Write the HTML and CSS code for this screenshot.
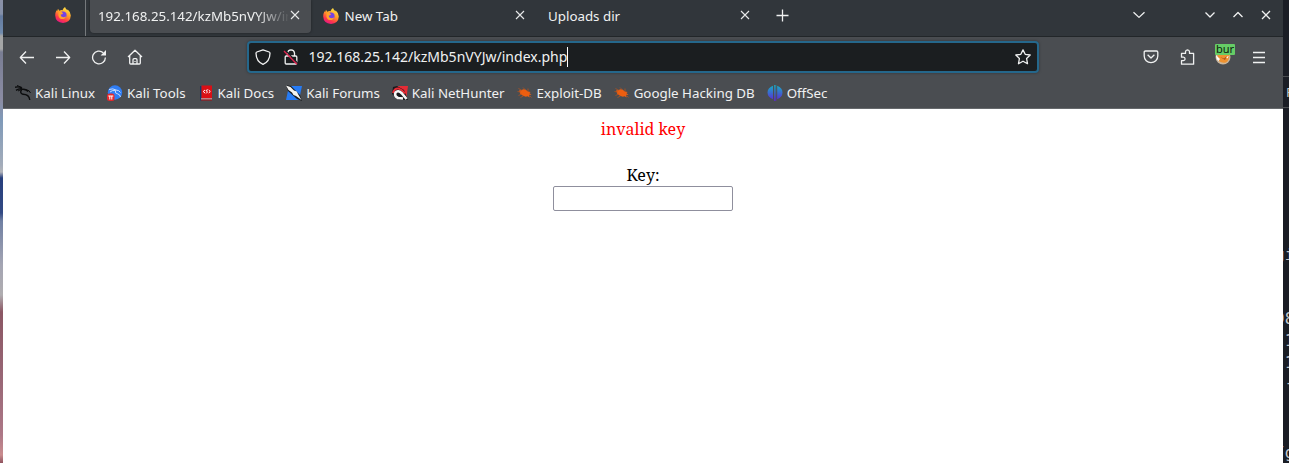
FILE: index.html
```html
<!DOCTYPE html>
<html lang="en">
<head>
    <meta charset="UTF-8">
    <meta name="viewport" content="width=device-width, initial-scale=1.0">
    <title>index.php</title>
    <link rel="stylesheet" href="styles.css">
</head>
<body>
    <!-- Shared icon shapes -->
    <svg class="defs" width="0" height="0">
        <defs>
            <linearGradient id="fox" x1="0.8" y1="0" x2="0.3" y2="1">
                <stop offset="0" stop-color="#fff04a"/>
                <stop offset="0.45" stop-color="#ff9b28"/>
                <stop offset="0.75" stop-color="#ff3a48"/>
                <stop offset="1" stop-color="#e31587"/>
            </linearGradient>
            <linearGradient id="offsec" gradientUnits="userSpaceOnUse" x1="0" y1="0" x2="0" y2="16">
                <stop offset="0" stop-color="#16b0c4"/>
                <stop offset="1" stop-color="#5f22d8"/>
            </linearGradient>
            <symbol id="firefox" viewBox="0 0 16 16">
                <path fill="url(#fox)" d="M1.5 3.2 2.2 4 3 1.8 4.3 3.7Q6 2.8 7.5 3.2 8 1.4 10 0q.6 2 2.4 3.2.3-.4.2-1Q15.8 5 15.8 8.6 15.4 15.6 8 16 .6 15.5.2 8.5.2 5.5 1.5 3.2z"/>
                <circle cx="8" cy="8" r="3.6" fill="#7543e3"/>
                <path fill="#ffa32b" d="M3.5 5.2Q6 4 8 6.2L7.6 7 5.6 7.8q.2 2.4 2.6 2.4 2 0 3-1-.8 2.8-3.6 2.8Q4 12 3.4 8.4z"/>
            </symbol>
            <symbol id="close" viewBox="0 0 10 10">
                <path d="M1 1l8 8M9 1L1 9" fill="none" stroke="#e8e9ea" stroke-width="1.1"/>
            </symbol>
            <symbol id="spider" viewBox="0 0 16 16">
                <path fill="#ec5e10" d="M2 5.500 4.500 5 6.400 4.200 8.400 4.400 11 6.400 13.800 7 12.400 8 14.500 10 12.200 9.800 12.600 12.400 10.600 11.200 8.800 11.700 6 10.800 3.400 9z"/>
                <path fill="none" stroke="#c05318" stroke-width=".7" d="M1.500 3.500 5 5.500M.5 6.500 4 7M1.500 10.500 5 9M3.500 12.500 6.500 11M6 2.500l2 2M11 3.500v3M13 11l1.500 1.500"/>
            </symbol>
        </defs>
    </svg>

    <div class="desktop">
        <div class="wallpaper"></div>

        <div class="browser">
            <div class="tab-bar">
                <div class="tab pinned"><svg class="favicon"><use href="#firefox"/></svg></div>
                <div class="tab active">
                    <span class="tab-title faded">192.168.25.142/kzMb5nVYJw/in</span>
                    <svg class="close"><use href="#close"/></svg>
                </div>
                <div class="tab">
                    <svg class="favicon"><use href="#firefox"/></svg>
                    <span class="tab-title">New Tab</span>
                    <svg class="close"><use href="#close"/></svg>
                </div>
                <div class="tab">
                    <span class="tab-title">Uploads dir</span>
                    <svg class="close"><use href="#close"/></svg>
                </div>
                <svg class="new-tab" width="13" height="13" viewBox="0 0 13 13"><path d="M6.500.5v12M.5 6.500h12"/></svg>
                <div class="window-buttons">
                    <svg class="list-tabs" width="12" height="8" viewBox="0 0 12 8"><path d="M.5 1.200 6 6.400l5.500-5.200"/></svg>
                    <svg width="10" height="8" viewBox="0 0 10 8"><path d="M.5 1.500 5 6l4.500-4.500"/></svg>
                    <svg width="10" height="8" viewBox="0 0 10 8"><path d="M.5 6 5 1.500 9.500 6"/></svg>
                    <svg width="10" height="10" viewBox="0 0 10 10"><path d="M1 1l8 8M9 1L1 9"/></svg>
                </div>
            </div>

            <div class="nav-bar">
                <div class="nav-buttons">
                    <svg width="16" height="16" viewBox="0 0 16 16"><path d="M15 8.500H1.500M7 2.500 1.300 8.500 7 14.500"/></svg>
                    <svg width="16" height="16" viewBox="0 0 16 16"><path d="M1 8.500h13.500M9 2.500l5.700 6L9 14.500"/></svg>
                    <svg width="16" height="16" viewBox="0 0 16 16"><path d="M12.300 3.700A6.400 6.400 0 1 0 14.400 8.500"/><path class="solid" d="M15 1v5.400H9.600z"/></svg>
                    <svg width="16" height="16" viewBox="0 0 16 16"><path d="M1 8 8 1.200 15 8M2.700 6.800v7.200q0 1 1 1h8.600q1 0 1-1V6.800M6 15v-4.300q0-1 1-1h2q1 0 1 1V15M8 12v1"/></svg>
                </div>
                <div class="url-bar">
                    <svg width="16" height="16" viewBox="0 0 16 16"><path d="M8 .8 14.200 3q.8.3.8 1.200Q14.800 12.500 8 15.300 1.200 12.500 1 4.200 1 3.300 1.800 3z"/></svg>
                    <svg class="lock" width="16" height="16" viewBox="0 0 16 16"><path d="M4.500 7V4q.4-3 3.500-3.200Q11.200 1 11.500 4v3M3.200 7h9.600q1 0 1 1v6q0 1-1 1H3.200q-1 0-1-1V8q0-1 1-1z"/><path class="slash-gap" d="M2.500 1.500 15.500 15"/><path class="slash" d="M1 2 14 15.300"/></svg>
                    <span class="url">192.168.25.142/kzMb5nVYJw/index.php</span>
                    <span class="caret"></span>
                    <svg class="star" width="16" height="16" viewBox="0 0 16 16"><path d="M8 .9 10.200 5.300 15.200 6 11.600 9.500 12.500 14.700 8 12.200 3.500 14.700 4.400 9.500.8 6 5.800 5.300z"/></svg>
                </div>
                <div class="nav-actions">
                    <svg width="16" height="16" viewBox="0 0 16 16"><path d="M2.500 2h11q1.300 0 1.300 1.300V7A6.800 6.600 0 0 1 1.200 7V3.300Q1.200 2 2.500 2zM4.600 5.800 8 9l3.400-3.200"/></svg>
                    <svg width="16" height="16" viewBox="0 0 16 16"><path d="M2.500 4.400h4V2.700Q6.800 1 8.500.9 10.200 1 10.500 2.700v1.700h4.100v10.800H2.500v-3.500h1.900Q6 11.500 6.100 10 6 8.400 4.400 8.200H2.500z"/></svg>
                    <div class="foxy">
                        <svg width="16" height="16" viewBox="0 0 16 16"><circle cx="8" cy="8" r="7.500" fill="#c9b59b"/><path class="fur" d="M2 5h12.500q0 6.500-3.500 8.500-4.500 1-7-1.500z"/><path class="light" d="M.8 6 5 10 3.500 12q-2.500-2-2.700-6zM13.800 7l-1.500 2.500L11 8z"/><path class="shade" d="M5 8l4 1.500L12 7l-2 4z"/></svg>
                        <span class="badge">bur</span>
                    </div>
                    <svg width="16" height="16" viewBox="0 0 16 16"><path d="M2 3.500h12M2 8.500h12M2 13.500h12"/></svg>
                </div>
            </div>

            <div class="bookmarks">
                <a class="bookmark">
                    <svg viewBox="0 0 16 16"><path fill="none" stroke="#0b0c0d" stroke-width="1.400" d="M0 2.300Q4 1 7 3.400M1 5.300q4-2.500 7-1 4 0 5 2.300M7 4Q4 8 8 9.300q6 0 6.800 5.700"/><path fill="none" stroke="#0b0c0d" d="M2 .5l5 2M9 4.500l5 1.200 1.500 2.300M3 6l3-1.500"/></svg>
                    <span>Kali Linux</span>
                </a>
                <a class="bookmark">
                    <svg viewBox="0 0 16 16"><circle cx="8" cy="7.500" r="7.200" fill="#2f7df4"/><path fill="none" stroke="#d8e8ff" stroke-width=".9" d="M2 4.500q4-1.500 7 .5 3 0 4.500 2.500M3 7q2-2 5.500-1.500-1 3 2 3.300 2.500.5 3 3.200"/><rect y="8.500" width="7.500" height="7.500" rx="2.500" fill="#e5282d"/><path stroke="#fff" stroke-width="1" fill="none" d="M1.300 11h5M2.800 11v3.500M4.800 11v3.500"/></svg>
                    <span>Kali Tools</span>
                </a>
                <a class="bookmark">
                    <svg viewBox="0 0 16 16"><path fill="#183766" d="M2 1h1.500v14.500H2z"/><path fill="#da0f15" d="M3.500.5H14v13H3.500z"/><path fill="#e9dada" d="M3 13.500h11v1H3z"/><path fill="#a80c12" d="M3 14.500h11v1H3z"/><path fill="none" stroke="#fff" d="M7 5 5.200 6.500 7 8M10.700 5l1.600 1.500L10.700 8M9.800 4.700 8 5.500l1.500 1.500L8 8.500"/></svg>
                    <span>Kali Docs</span>
                </a>
                <a class="bookmark">
                    <svg viewBox="0 0 16 16"><path fill="#267bf5" d="M3 1h13l-3 14H0z"/><path fill="#191c20" d="M0 0l5 1 9 9 2 6-5-2-9-8z"/><path fill="#f3f3f1" d="M0 .5 4.500 2 8 5.500l2.800 1L12 9l3.500 6-5.500-4-2.500-1L6 7.500 2.500 5z"/></svg>
                    <span>Kali Forums</span>
                </a>
                <a class="bookmark">
                    <svg viewBox="0 0 16 16"><path fill="#e52b35" d="M5 1h11l-1.500 11z"/><path fill="#17191c" d="M1 2l4-1 7 4 4 10H7L0 9z"/><path fill="none" stroke="#e52b35" stroke-width="2" d="M1 8Q2.500 3 6.500 3.500 10 4.500 13 8.500"/><path fill="none" stroke="#f7f7f7" stroke-width="2.600" d="M14.500 14 10 8.500Q6 4.500 3.500 7.500 2 11 6 13l5 .5"/></svg>
                    <span>Kali NetHunter</span>
                </a>
                <a class="bookmark"><svg><use href="#spider"/></svg><span>Exploit-DB</span></a>
                <a class="bookmark"><svg><use href="#spider"/></svg><span>Google Hacking DB</span></a>
                <a class="bookmark">
                    <svg viewBox="0 0 16 16"><path fill="url(#offsec)" d="M6 .8v13.400Q.6 12 .5 7.500.6 3 6 .8zM7 0h.8v16H7zM8.400 0h.8v16h-.8zM10.200.8q5.300 2.200 5.300 6.700t-5.300 6.700z"/></svg>
                    <span>OffSec</span>
                </a>
            </div>

            <div class="page">
                <div class="error">invalid key</div>
                <form onsubmit="return false">
                    <label for="key">Key:</label>
                    <input type="text" id="key" name="key">
                </form>
            </div>
        </div>

        <div class="terminal">
            <div class="menu">F</div>
            <pre class="l1">gi</pre>
            <pre class="l2">98</pre>
            <pre class="l3">-1</pre>
            <pre class="l4">-1</pre>
            <pre class="l5">--</pre>
            <pre class="l6">/g</pre>
        </div>
    </div>
</body>
</html>
```
FILE: styles.css
```css
* {
    margin: 0;
    padding: 0;
    box-sizing: border-box;
}

body {
    font-family: "Noto Sans", sans-serif;
    font-size: 13.330px;
    color: #f0f1f1;
    background-color: #1a1d25;
    overflow: hidden;
}

svg {
    display: block;
    flex: none;
}

.defs {
    position: absolute;
}

.desktop {
    display: flex;
    height: 463px;
}

.wallpaper {
    width: 3px;
    background: linear-gradient(#8b91a6 0, #8490a9 14px, #647b9f 16px, #708bad 33px, #a5a6a7 36px, #a5a6a7 49px, #797d93 52px, #8b8ca3 100px, #7f9ab9 120px, #a3acba 165px, #b3b5bb 172px, #273f7d 178px, #334a84 213px, #7080a3 221px, #a4a5b3 265px, #b0adb0 295px, #8b5764 312px, #996776 380px, #ad7887 435px, #c98c8e 455px, #8e525e 463px);
}

.browser {
    width: 1280px;
    display: flex;
    flex-direction: column;
    background-color: #4a4d51;
}

/* Tab bar */
.tab-bar {
    height: 37px;
    display: flex;
    align-items: flex-start;
    background-color: #31363b;
    border-bottom: 1px solid #222629;
}

.tab {
    display: flex;
    align-items: center;
    width: 225px;
    height: 33px;
    padding: 0 11px 2px 12px;
}

.favicon {
    width: 16px;
    height: 16px;
}

.tab .close {
    width: 10px;
    height: 10px;
    margin-top: -1px;
    margin-left: auto;
}

.pinned {
    width: 83px;
    height: 36px;
    padding: 0 0 6px 52px;
    border-right: 1px solid #75797c;
}

.active {
    width: 221px;
    margin-left: 4px;
    padding-left: 8px;
    background-color: #4a4d51;
    border-radius: 0 0 4px 4px;
    box-shadow: 0 0 3px rgba(0, 0, 0, 0.4);
}

.tab-title {
    white-space: nowrap;
}

.favicon + .tab-title {
    margin-left: 5.500px;
}

.faded {
    width: 190px;
    overflow: hidden;
    -webkit-mask-image: linear-gradient(to right, #000 158px, transparent 192px);
    mask-image: linear-gradient(to right, #000 158px, transparent 192px);
}

.tab-bar path,
.nav-bar path {
    fill: none;
    stroke: #f0f1f1;
    stroke-width: 1.300;
    stroke-linejoin: round;
}

.new-tab {
    margin: 9px 0 0 15px;
}

.window-buttons {
    display: flex;
    align-items: center;
    gap: 18px;
    margin: 10px 12px 0 auto;
}

.list-tabs {
    margin-right: 42px;
}

/* Navigation toolbar */
.nav-bar {
    height: 41px;
    display: flex;
    align-items: center;
    padding-bottom: 1px;
}

.nav-buttons {
    display: flex;
    gap: 20px;
    margin-left: 16px;
}

.nav-bar .solid {
    fill: #f0f1f1;
    stroke: none;
}

.url-bar {
    width: 792px;
    height: 32px;
    display: flex;
    align-items: center;
    margin-left: 104px;
    padding: 0 6px;
    background-color: #1b1e20;
    border: 2px solid #25678b;
    border-radius: 4px;
    box-shadow: 0 0 3px rgba(0, 0, 0, 0.35);
}

.lock {
    margin-left: 12px;
}

.url-bar .slash {
    stroke: #e0224e;
}

.url-bar .slash-gap {
    stroke: #1b1e20;
}

.url {
    margin-left: 9.400px;
    padding-bottom: 2px;
    font-size: 14.040px;
    white-space: nowrap;
}

.caret {
    width: 1px;
    height: 20px;
    background-color: #fff;
}

.star {
    margin-left: auto;
}

.nav-actions {
    display: flex;
    align-items: center;
    gap: 20px;
    margin: 0 16px 0 auto;
}

.foxy {
    position: relative;
}

.foxy .badge {
    position: absolute;
    top: -5px;
    left: 0;
    width: 20px;
    height: 11px;
    border-radius: 1px;
    background-color: #66cc66;
    color: #0c180c;
    font-size: 11px;
    line-height: 10px;
    text-align: center;
}

.nav-bar .foxy path {
    stroke: none;
}

.nav-bar .foxy .fur {
    fill: #ef922f;
}

.nav-bar .foxy .light {
    fill: #fff;
}

.nav-bar .foxy .shade {
    fill: #a8521c;
}

/* Bookmarks toolbar */
.bookmarks {
    height: 31px;
    display: flex;
    align-items: center;
    gap: 12px;
    padding-left: 12px;
    border-bottom: 1px solid #66696c;
}

.bookmark {
    display: flex;
    align-items: center;
    gap: 4px;
    white-space: nowrap;
}

.bookmark svg {
    width: 16px;
    height: 16px;
}

/* Page content */
.page {
    flex: 1;
    padding-top: 9px;
    background-color: #fff;
    color: #000;
    font-family: "Noto Serif", "DejaVu Serif Condensed", "DejaVu Serif", serif;
    font-size: 16px;
    line-height: 23px;
    text-align: center;
}

.error {
    margin-bottom: 23px;
    color: #f00;
}

form label {
    display: block;
    height: 22px;
}

form input {
    display: block;
    width: 180px;
    height: 25px;
    margin: 0 auto;
    border: 1px solid #8f8f9d;
    border-radius: 2px;
    background-color: #fff;
}

/* Terminal behind the browser */
.terminal {
    width: 6px;
    overflow: hidden;
    background-color: #1a1d25;
    color: #c4c7cc;
}

.terminal pre {
    font: 16px/20px "DejaVu Sans Mono", monospace;
    margin-left: -8px;
    height: 20px;
}

.menu {
    height: 32px;
    margin-top: 76px;
    padding-left: 3px;
    border-top: 1px solid #4a4d51;
    border-bottom: 1px solid #4a4d51;
    line-height: 30px;
}

.terminal .l1 {
    margin-top: 137px;
}

.terminal .l2 {
    margin-top: 44px;
}

.terminal .l3,
.terminal .l4 {
    margin-top: 2px;
}

.terminal .l5 {
    margin-top: 0;
}

.terminal .l6 {
    margin-top: 50px;
}
```
